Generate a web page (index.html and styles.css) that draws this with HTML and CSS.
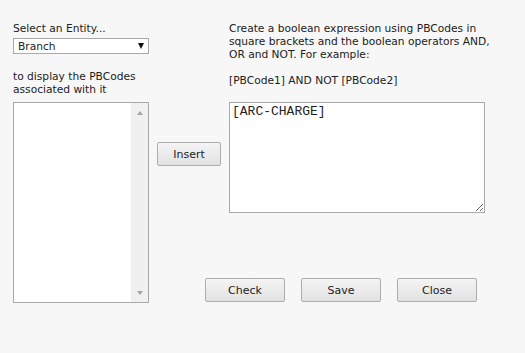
FILE: index.html
```html
<!DOCTYPE html>
<html lang="en">
<head>
    <meta charset="UTF-8">
    <title>PBCode Expression</title>
    <link rel="stylesheet" href="styles.css">
</head>
<body>
    <div class="dialog">
        <div class="top-row">
            <div class="left-col">
                <label for="entity">Select an Entity...</label>
                <div class="select-wrap">
                    <select id="entity">
                        <option>Branch</option>
                    </select>
                </div>
                <p class="hint">to display the PBCodes associated with it</p>
            </div>
            <div class="right-col">
                <p class="intro">Create a boolean expression using PBCodes in square brackets and the boolean operators AND, OR and NOT. For example:</p>
                <p class="example">[PBCode1] AND NOT [PBCode2]</p>
            </div>
        </div>

        <div class="edit-row">
            <div class="codes-list">
                <div class="codes-items"></div>
                <div class="scrollbar">
                    <span class="arrow-up"></span>
                    <span class="arrow-down"></span>
                </div>
            </div>
            <div class="edit-area">
                <div class="expr-row">
                    <div class="insert-col">
                        <button class="btn insert-btn">Insert</button>
                    </div>
                    <textarea id="expression" spellcheck="false">[ARC-CHARGE]</textarea>
                </div>
                <div class="actions">
                    <button class="btn">Check</button>
                    <button class="btn">Save</button>
                    <button class="btn">Close</button>
                </div>
            </div>
        </div>
    </div>
</body>
</html>
```

FILE: styles.css
```css
body {
    margin: 0;
    background-color: #f7f7f7;
    font-family: "DejaVu Sans", Verdana, sans-serif;
    font-size: 8pt;
    line-height: 13px;
    color: #222;
}
.dialog {
    padding: 22px 0 0 13px;
}
p {
    margin: 0;
}
.top-row {
    display: flex;
    height: 80px;
}
.left-col {
    width: 136px;
    margin-right: 80px;
}
.select-wrap {
    position: relative;
    width: 136px;
    height: 16px;
    margin-top: 3px;
}
.select-wrap select {
    -webkit-appearance: none;
    appearance: none;
    width: 136px;
    height: 16px;
    border: 1px solid #a9a9a9;
    border-radius: 0;
    background-color: white;
    font-family: inherit;
    font-size: 8pt;
    color: #222;
    padding: 0 0 0 4px;
    margin: 0;
}
.select-wrap::after {
    content: "";
    position: absolute;
    right: 5px;
    top: 5px;
    border-left: 3.5px solid transparent;
    border-right: 3.5px solid transparent;
    border-top: 6px solid #111;
    pointer-events: none;
}
.hint {
    margin-top: 16px;
}
.right-col {
    width: 276px;
}
.example {
    margin-top: 13px;
}

.edit-row {
    display: flex;
    align-items: flex-start;
}
.codes-list {
    display: flex;
    width: 134px;
    height: 199px;
    border: 1px solid #a9a9a9;
    background-color: white;
}
.codes-items {
    flex: 1;
}
.scrollbar {
    width: 17px;
    background-color: #f0f0f0;
    display: flex;
    flex-direction: column;
    justify-content: space-between;
    align-items: center;
    padding: 8px 0 7px;
}
.arrow-up {
    border-left: 3.5px solid transparent;
    border-right: 3.5px solid transparent;
    border-bottom: 4px solid #a3a3a3;
}
.arrow-down {
    border-left: 3.5px solid transparent;
    border-right: 3.5px solid transparent;
    border-top: 4px solid #a3a3a3;
}
.expr-row {
    display: flex;
    align-items: flex-start;
}
.insert-col {
    padding: 40px 8px 0 8px;
}
.btn {
    height: 24px;
    border: 1px solid #adadad;
    border-radius: 2px;
    background: linear-gradient(#f4f4f4, #e2e2e2);
    font-family: inherit;
    font-size: 11px;
    color: #222;
    padding: 0;
    margin: 0;
}
.insert-btn {
    width: 64px;
}
textarea {
    display: block;
    width: 256px;
    height: 111px;
    box-sizing: border-box;
    border: 1px solid #a9a9a9;
    border-radius: 0;
    background-color: white;
    font-family: "Liberation Mono", "Courier New", monospace;
    font-size: 13px;
    line-height: 15px;
    color: #222;
    padding: 1px 2px;
    margin: 0;
    outline: none;
}

.actions {
    display: flex;
    gap: 16px;
    margin: 65px 0 0 56px;
}
.actions .btn {
    width: 80px;
}
```
